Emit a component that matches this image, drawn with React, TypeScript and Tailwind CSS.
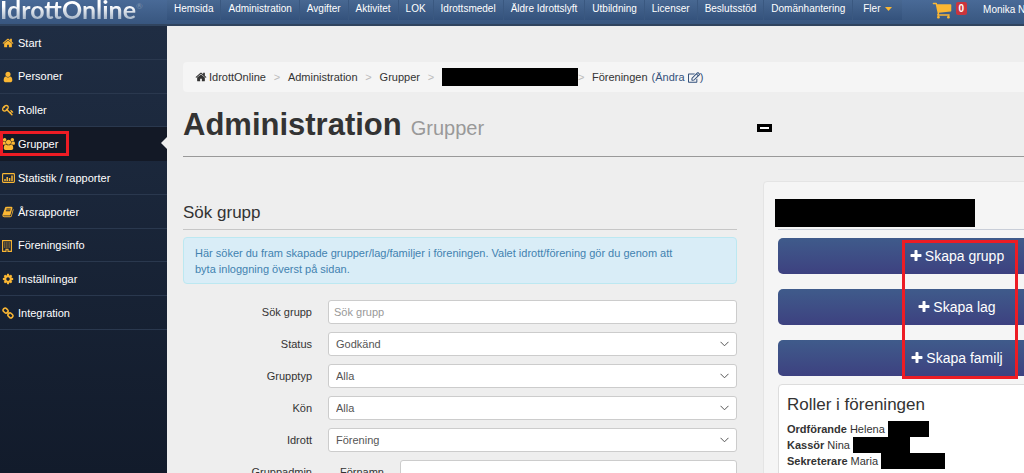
import type { ReactNode } from 'react';
import { FaRegEdit } from 'react-icons/fa';

type IconProps = { d: string; className?: string; viewBox?: string };

function Icon({ d, className, viewBox = '0 0 1792 1792' }: IconProps) {
  return (
    <svg className={className} viewBox={viewBox} fill="currentColor" aria-hidden="true">
      <path d={d} />
    </svg>
  );
}

const paths = {
  home: 'M1472 992v480q0 26-19 45t-45 19h-384v-384h-256v384h-384q-26 0-45-19t-19-45v-480q0-1 .5-3t.5-3l575-474 575 474q1 2 1 6zm223-69l-62 74q-8 9-21 11h-3q-13 0-21-7l-692-577-692 577q-12 8-24 7-13-2-21-11l-62-74q-8-10-7-23.5t11-21.5l719-599q32-26 76-26t76 26l244 204v-195q0-14 9-23t23-9h192q14 0 23 9t9 23v408l219 182q10 8 11 21.5t-7 23.5z',
  user: 'M1536 1399q0 109-62.5 187t-150.5 78h-854q-88 0-150.5-78t-62.5-187q0-85 8.5-160.5t31.5-152 58.5-131 94-89 134.5-34.5q131 128 313 128t313-128q76 0 134.5 34.5t94 89 58.5 131 31.5 152 8.5 160.5zm-256-887q0 159-112.5 271.5t-271.5 112.5-271.5-112.5-112.5-271.5 112.5-271.5 271.5-112.5 271.5 112.5 112.5 271.5z',
  key: 'M832 512q0-80-56-136t-136-56-136 56-56 136q0 42 19 83-41-19-83-19-80 0-136 56t-56 136 56 136 136 56 136-56 56-136q0-42-19-83 41 19 83 19 80 0 136-56t56-136zm851 704q0 17-49 66t-66 49q-9 0-28.5-16t-36.5-33-38.5-40-24.5-26l-96 96 220 220q28 28 28 68 0 42-39 81t-81 39q-40 0-68-28l-671-671q-176 131-365 131-163 0-265.5-102.5t-102.5-265.5q0-160 95-313t248-248 313-95q163 0 265.5 102.5t102.5 265.5q0 189-131 365l355 355 96-96q-3-3-26-24.5t-40-38.5-33-36.5-16-28.5q0-17 49-66t66-49q13 0 23 10 6 6 46 44.5t82 79.5 86.5 86 73 78 28.5 41z',
  users: 'M529 896q-162 5-265 128h-134q-82 0-138-40.5t-56-118.5q0-353 124-353 6 0 43.5 21t97.5 42.5 119 21.5q67 0 133-23-5 37-5 66 0 159 81 256zm1071 637q0 120-73 189.5t-194 69.5h-874q-121 0-194-69.5t-73-189.5q0-53 3.5-103.5t14-109 26.5-108.5 43-97.5 62-81 85.5-53.5 111.5-20q10 0 43 21.5t73 48 107 48 135 21.5 135-21.5 107-48 73-48 43-21.5q61 0 111.5 20t85.5 53.5 62 81 43 97.5 26.5 108.5 14 109 3.500 103.500zm-1024-1277q0 106-75 181t-181 75-181-75-75-181 75-181 181-75 181 75 75 181zm704 384q0 159-112.5 271.5t-271.5 112.5-271.5-112.5-112.5-271.5 112.5-271.5 271.5-112.5 271.5 112.5 112.5 271.5zm576 225q0 78-56 118.5t-138 40.5h-134q-103-123-265-128 81-97 81-256 0-29-5-66 66 23 133 23 59 0 119-21.5t97.5-42.5 43.5-21q124 0 124 353zm-128-609q0 106-75 181t-181 75-181-75-75-181 75-181 181-75 181 75 75 181z',
  book: 'M1703 478q40 57 18 129l-275 906q-19 64-76.5 107.5t-122.5 43.5h-923q-77 0-148.5-53.5t-99.5-131.5q-24-67-2-127 0-4 3-27t4-37q1-8-3-21.5t-3-19.5q2-11 8-21t16.5-23.5 16.5-23.5q23-38 45-91.5t30-91.5q3-10 .5-30t-.5-28q3-11 17-28t17-23q21-36 42-92t25-90q1-9-2.5-32t.5-28q4-13 22-30.5t22-22.5q19-26 42.5-84.5t27.5-96.5q1-8-3-25.5t-2-26.5q2-8 9-18t18-23 17-21q8-12 16.5-30.5t15-35 16-36 19.5-32 26.5-23.5 36-11.5 47.5 5.5l-1 3q38-9 51-9h761q74 0 114 56t18 130l-274 906q-36 119-71.5 153.5t-128.5 34.5h-869q-27 0-38 15-11 16-1 43 24 70 144 70h923q29 0 56-15.5t35-41.5l300-987q7-22 5-57 38 15 59 43zm-1064 2q-4 13 2 22.5t20 9.5h608q13 0 25.5-9.5t16.5-22.5l21-64q4-13-2-22.5t-20-9.5h-608q-13 0-25.5 9.5t-16.5 22.5zm-83 256q-4 13 2 22.5t20 9.5h608q13 0 25.5-9.5t16.5-22.5l21-64q4-13-2-22.5t-20-9.5h-608q-13 0-25.5 9.5t-16.5 22.5z',
  cog: 'M1152 896q0-106-75-181t-181-75-181 75-75 181 75 181 181 75 181-75 75-181zm512-109v222q0 12-8 23t-20 13l-185 28q-19 54-39 91 35 50 107 138 10 12 10 25t-9 23q-27 37-99 108t-94 71q-12 0-26-9l-138-108q-44 23-91 38-16 136-29 186-7 28-36 28h-222q-14 0-24.5-8.5t-11.5-21.5l-28-184q-49-16-90-37l-141 107q-10 9-25 9-14 0-25-11-126-114-165-168-7-10-7-23 0-12 8-23 15-21 51-66.5t54-70.5q-27-50-41-99l-183-27q-13-2-21-12.5t-8-23.5v-222q0-12 8-23t19-13l186-28q14-46 39-92-40-57-107-138-10-12-10-24 0-10 9-23 26-36 98.5-107.5t94.5-71.5q13 0 26 10l138 107q44-23 91-38 16-136 29-186 7-28 36-28h222q14 0 24.5 8.5t11.5 21.5l28 184q49 16 90 37l142-107q9-9 24-9 13 0 25 10 129 119 165 170 7 8 7 22 0 12-8 23-15 21-51 66.5t-54 70.5q26 50 41 98l183 28q13 2 21 12.5t8 23.5z',
  plus: 'M1600 736v192q0 40-28 68t-68 28h-416v416q0 40-28 68t-68 28h-192q-40 0-68-28t-28-68v-416h-416q-40 0-68-28t-28-68v-192q0-40 28-68t68-28h416v-416q0-40 28-68t68-28h192q40 0 68 28t28 68v416h416q40 0 68 28t28 68z',
  cart: 'M704 1536q0 52-38 90t-90 38-90-38-38-90 38-90 90-38 90 38 38 90zm896 0q0 52-38 90t-90 38-90-38-38-90 38-90 90-38 90 38 38 90zm128-1088v512q0 24-16.5 42.5t-40.5 21.5l-1044 122q13 60 13 70 0 16-24 64h920q26 0 45 19t19 45-19 45-45 19h-1024q-26 0-45-19t-19-45q0-11 8-31.5t16-36 21.5-40 15.5-29.5l-177-823h-204q-26 0-45-19t-19-45 19-45 45-19h256q16 0 28.5 6.5t19.5 15.5 13 24.5 8 26 5.5 29.5 4.5 26h1201q26 0 45 19t19 45z',
};

function ChartIcon() {
  return (
    <svg className="h-3 w-[13px]" viewBox="0 0 13 12" fill="none" stroke="currentColor" aria-hidden="true">
      <rect x="0.6" y="1.6" width="11.8" height="8.8" rx="0.8" strokeWidth="1.1" />
      <path d="M3 9V7M5.2 9V5M7.6 9V6M10 9V3.5" strokeWidth="1.5" />
    </svg>
  );
}

function BuildingIcon() {
  return (
    <svg className="h-3 w-[10px]" viewBox="0 0 10 12" fill="none" stroke="currentColor" aria-hidden="true">
      <path d="M.6.6h8.8v10.8H6V9.2H4v2.2H.6z" strokeWidth="1.1" />
      <path d="M2 3h6M2 5h6M2 7h6" strokeWidth="1.2" strokeDasharray="1.2 .5" opacity=".75" />
    </svg>
  );
}

function ChainIcon() {
  return (
    <svg className="h-3 w-3" viewBox="0 0 12 12" fill="none" stroke="currentColor" strokeWidth="1.5" aria-hidden="true">
      <rect x="1" y="1.6" width="5.2" height="4" rx="1.8" transform="rotate(45 3.6 3.6)" />
      <rect x="5.8" y="6.4" width="5.2" height="4" rx="1.8" transform="rotate(45 8.4 8.4)" />
      <path d="M4.7 4.7l2.6 2.6" />
    </svg>
  );
}

const topLinks = [
  'Hemsida', 'Administration', 'Avgifter', 'Aktivitet', 'LOK', 'Idrottsmedel',
  'Äldre Idrottslyft', 'Utbildning', 'Licenser', 'Beslutsstöd', 'Domänhantering',
];

const menu: { label: string; icon: ReactNode; active?: boolean }[] = [
  { label: 'Start', icon: <Icon d={paths.home} className="h-3 w-3" /> },
  { label: 'Personer', icon: <Icon d={paths.user} className="h-3 w-3" /> },
  { label: 'Roller', icon: <Icon d={paths.key} className="h-3 w-3" /> },
  { label: 'Grupper', icon: <Icon d={paths.users} viewBox="-64 0 1920 1792" className="h-3 w-[13px]" />, active: true },
  { label: 'Statistik / rapporter', icon: <ChartIcon /> },
  { label: 'Årsrapporter', icon: <Icon d={paths.book} className="h-3 w-3" /> },
  { label: 'Föreningsinfo', icon: <BuildingIcon /> },
  { label: 'Inställningar', icon: <Icon d={paths.cog} className="h-3 w-3" /> },
  { label: 'Integration', icon: <ChainIcon /> },
];

const filters = [
  { id: 'status', label: 'Status', value: 'Godkänd' },
  { id: 'grupptyp', label: 'Grupptyp', value: 'Alla' },
  { id: 'kon', label: 'Kön', value: 'Alla' },
  { id: 'idrott', label: 'Idrott', value: 'Förening' },
];

function TopBar() {
  return (
    <header className="flex h-[26px] shrink-0 items-start overflow-hidden border-b-2 border-[#30445f] bg-linear-to-b from-[#496a97] to-[#38567f] text-[10px] text-white">
      <a href="#" className="flex h-6 w-[167px] shrink-0 items-end font-[Lato,sans-serif] text-[25px] leading-[30px] font-bold">
        <span className="bg-linear-to-b from-white from-40% to-[#aebccd] to-80% bg-clip-text text-transparent">IdrottOnline</span>
        <sup className="pb-1 text-[8px] leading-5 font-normal text-[#7d93ae]">®</sup>
      </a>
      <nav className="flex h-5 shrink-0 bg-linear-to-b from-[#486892] to-[#34527c]">
        {topLinks.map((label) => (
          <a key={label} href="#" className="border-r border-[#3a5880] px-[7px] leading-[17px]">
            {label}
          </a>
        ))}
        <a href="#" className="flex items-start gap-1 px-[10px] leading-[17px]">
          Fler
          <svg className="mt-[7px] h-1 w-[7px] text-[#fbb733]" viewBox="0 0 7 4" fill="currentColor" aria-hidden="true">
            <path d="M0 0h7L3.5 4z" />
          </svg>
        </a>
      </nav>
      <a href="#" className="ml-[30px] flex shrink-0 items-start gap-1" aria-label="Varukorg">
        <Icon d={paths.cart} className="h-5 w-5 text-[#fbb733]" />
        <span className="mt-[2px] h-[13px] rounded-xs bg-[#c9353d] px-[3px] text-center leading-[13px] font-bold">0</span>
      </a>
      <a href="#" className="ml-4 shrink-0 leading-5 whitespace-nowrap">Monika N</a>
    </header>
  );
}

function Sidebar() {
  return (
    <aside className="w-[167px] shrink-0 bg-linear-to-b from-[#1f2d43] to-[#121b2b] text-[11px] text-white">
      <nav className="grid h-[304px] auto-rows-fr">
        {menu.map(({ label, icon, active }) => (
          <a
            key={label}
            href="#"
            className={
              active
                ? 'relative flex items-center bg-[#131926] pl-[2px]'
                : 'flex items-center border-b border-[#2a384e] pt-px pl-[2px]'
            }
          >
            <span className="flex w-4 text-[#fbb733]">{icon}</span>
            {label}
            {active && (
              <>
                <span className="absolute top-1 left-0 h-[25px] w-[69px] border-3 border-[#ed1c24]" />
                <svg className="absolute top-[10px] right-0 h-3 w-[6px] text-[#eeeeee]" viewBox="0 0 6 12" fill="currentColor" aria-hidden="true">
                  <path d="M6 0v12L0 6z" />
                </svg>
              </>
            )}
          </a>
        ))}
      </nav>
    </aside>
  );
}

function Breadcrumb() {
  return (
    <nav className="flex h-[30px] items-center rounded-sm bg-[#f5f5f5] px-3">
      <a href="#" className="flex items-center gap-[2px]">
        <Icon d={paths.home} className="h-3 w-3" />
        IdrottOnline
      </a>
      <span className="w-[22px] text-center text-[#bbbbbb]">&gt;</span>
      <a href="#">Administration</a>
      <span className="w-[22px] text-center text-[#bbbbbb]">&gt;</span>
      <a href="#">Grupper</a>
      <span className="w-[22px] text-center text-[#bbbbbb]">&gt;</span>
      <span className="h-[18px] w-[136px] bg-black" />
      <span className="w-[14px] text-[#bbbbbb]">&gt;</span>
      <span>Föreningen</span>
      <a href="#" className="ml-1 flex items-center text-[#34527c]">
        (Ändra
        <FaRegEdit className="ml-[3px] h-[11px] w-3" />)
      </a>
    </nav>
  );
}

function SearchForm() {
  return (
    <section className="min-w-0 flex-1 pt-4">
      <h2 className="border-b border-[#c6c6c6] pt-1 pb-1 text-[17px] leading-6 text-[#333333]">Sök grupp</h2>
      <p className="mt-[7px] rounded-sm border border-[#bce8f1] bg-[#d9edf7] px-[11px] pt-[7px] pb-[6px] leading-4 text-[#4282b0]">
        Här söker du fram skapade grupper/lag/familjer i föreningen. Valet idrott/förening gör du genom att
        <br />
        byta inloggning överst på sidan.
      </p>
      <form className="mt-4 flex flex-col gap-2">
        <div className="flex items-center gap-4">
          <label htmlFor="sok" className="w-[129px] text-right">Sök grupp</label>
          <input id="sok" placeholder="Sök grupp" className="h-6 min-w-0 flex-1 rounded-[3px] border border-[#cccccc] bg-white px-[5px] placeholder:text-[#999999]" />
        </div>
        {filters.map(({ id, label, value }) => (
          <div key={id} className="flex items-center gap-4">
            <label htmlFor={id} className="w-[129px] text-right">{label}</label>
            <div className="relative flex-1">
              <select id={id} className="block h-6 w-full appearance-none rounded-[3px] border border-[#cccccc] bg-white px-[7px] text-[#555555]">
                <option>{value}</option>
              </select>
              <svg className="pointer-events-none absolute top-[9px] right-2 h-[6px] w-[9px]" viewBox="0 0 9 6" fill="none" stroke="#555555" aria-hidden="true">
                <path d="M.5.8l4 4 4-4" />
              </svg>
            </div>
          </div>
        ))}
        <div className="flex items-center gap-4">
          <span className="w-[129px] text-right">Gruppadmin</span>
          <label htmlFor="fornamn" className="w-14 text-right">Förnamn</label>
          <input id="fornamn" className="h-6 min-w-0 flex-1 rounded-[3px] border border-[#cccccc] bg-white px-[5px]" />
        </div>
      </form>
    </section>
  );
}

function CreateButton({ label }: { label: string }) {
  return (
    <button type="button" className="flex h-9 w-full items-center justify-center gap-[2px] rounded-[5px] bg-linear-to-b from-[#3f5b8b] to-[#3d4180] text-[14px] text-white">
      <Icon d={paths.plus} className="h-[14px] w-[14px]" />
      {label}
    </button>
  );
}

function GroupPanel() {
  return (
    <aside className="w-[387px] shrink-0 rounded-sm border border-[#e4e4e4] bg-[#f5f5f5] px-[14px] pt-[17px]">
      <div className="border-b border-[#c9ced8] pb-[2px]">
        <div className="-ml-[3px] h-7 w-[200px] bg-black" />
      </div>
      <div className="relative mt-2 flex flex-col gap-[15px]">
        <CreateButton label="Skapa grupp" />
        <CreateButton label="Skapa lag" />
        <CreateButton label="Skapa familj" />
        <span className="pointer-events-none absolute top-[2px] left-[124px] h-[139px] w-[116px] border-3 border-[#ed1c24]" />
      </div>
      <div className="mt-2 rounded-sm border border-[#dddddd] bg-white px-2 pt-2 pb-10">
        <h3 className="mb-1 text-[17px] leading-6 text-[#333333]">Roller i föreningen</h3>
        <p className="flex h-4 items-center gap-[3px]"><b>Ordförande</b> Helena <span className="h-4 w-[41px] bg-black" /></p>
        <p className="flex h-4 items-center gap-[3px]"><b>Kassör</b> Nina <span className="h-4 w-[57px] bg-black" /></p>
        <p className="flex h-4 items-center gap-[3px]"><b>Sekreterare</b> Maria <span className="h-4 w-16 bg-black" /></p>
      </div>
    </aside>
  );
}

export default function App() {
  return (
    <div className="flex h-screen flex-col overflow-hidden bg-[#eeeeee] font-['Liberation_Sans',Arial,sans-serif] text-[11px] text-[#333333]">
      <TopBar />
      <div className="flex min-h-0 flex-1">
        <Sidebar />
        <main className="min-w-[983px] flex-1 pt-9 pl-4">
          <Breadcrumb />
          <div className="flex h-[65px] items-center border-b border-[#999999] pt-1 text-[31px] leading-9">
            <h1 className="flex items-baseline gap-[9px] font-bold">
              Administration
              <small className="text-[20px] font-normal text-[#999999]">Grupper</small>
            </h1>
            <span className="mt-1 ml-[273px] h-2 w-[15px] border-3 border-black bg-white" />
          </div>
          <div className="mt-6 flex items-start gap-[26px]">
            <SearchForm />
            <GroupPanel />
          </div>
        </main>
      </div>
    </div>
  );
}
